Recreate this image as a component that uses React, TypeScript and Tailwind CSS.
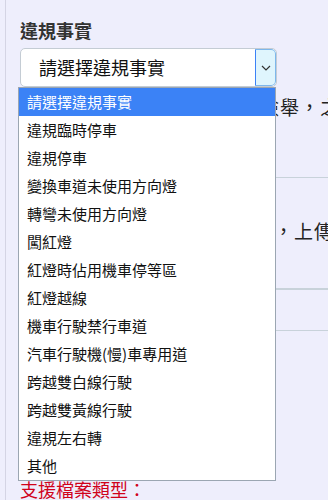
import React from "react";

const items = [
  "請選擇違規事實",
  "違規臨時停車",
  "違規停車",
  "變換車道未使用方向燈",
  "轉彎未使用方向燈",
  "闖紅燈",
  "紅燈時佔用機車停等區",
  "紅燈越線",
  "機車行駛禁行車道",
  "汽車行駛機(慢)車專用道",
  "跨越雙白線行駛",
  "跨越雙黃線行駛",
  "違規左右轉",
  "其他",
];

export default function App() {
  return (
    <div className="relative h-[500px] w-[328px] overflow-hidden bg-[#eeeefc] font-['Noto_Sans_CJK_TC','Liberation_Sans',sans-serif] text-[#222]">
      <div className="ml-[5px] h-full border-l border-[#d4d4e4] pl-[14px] pt-[17px]">
        <div className="text-[18px] font-bold leading-[27px] text-[#333]">違規事實</div>
        <div className="mt-[4px] flex h-[39px] w-[257px] overflow-hidden rounded-[5px] border border-[#c4ccd4] bg-white">
          <div className="flex flex-1 items-center pl-[18px] text-[18px] text-[#111]">請選擇違規事實</div>
          <div className="flex w-[21px] items-center justify-center rounded-r-[5px] border border-[#7db7ec] border-l-[#3b82f6] bg-[#dff5fd]">
            <svg width="10" height="6" viewBox="0 0 10 6" fill="none">
              <path d="M1 1l4 4 4-4" stroke="#333" strokeWidth="1.2" />
            </svg>
          </div>
        </div>
        <div className="mt-[8px] whitespace-nowrap text-[19px] leading-[24px] tracking-[1px] text-[#222]">請依實際情況選擇正確違規檢舉，之後續</div>
        <div className="mt-[58px] h-px w-[400px] bg-[#c8d2da]" />
        <div className="mt-[41px] whitespace-nowrap pl-[14px] text-[19px] leading-[24px] tracking-[1px] text-[#222]">請選擇上傳檔案並點選確定，上傳檔案</div>
        <div className="mt-[45px] h-[2px] w-[400px] bg-[#c8d2da]" />
        <div className="mt-[40px] h-px w-[400px] bg-[#c8d2da]" />
        <div className="mt-[146px] text-[18px] leading-[24px] text-[#d0021b]">支援檔案類型：</div>
      </div>
      <div className="absolute left-[18px] top-[87px] w-[258px] border border-[#9ba6b2] bg-white">
        {items.map((t, i) => (
          <div
            key={t}
            className={
              i === 0
                ? "flex h-[28px] items-center bg-[#3b82f6] pl-[8px] text-[15px] text-white"
                : "flex h-[28px] items-center pl-[8px] text-[15px] text-[#111]"
            }
          >
            {t}
          </div>
        ))}
      </div>
    </div>
  );
}
